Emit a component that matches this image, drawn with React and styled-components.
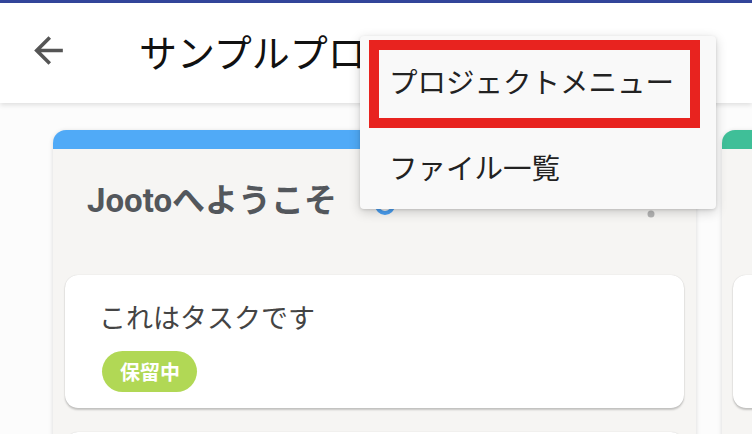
import React from 'react'
import styled, { createGlobalStyle } from 'styled-components'

const GlobalStyle = createGlobalStyle`
  html, body {
    margin: 0;
    padding: 0;
    width: 752px;
    height: 434px;
    overflow: hidden;
    background: #fcfcfc;
    font-family: Roboto, "Noto Sans CJK JP", sans-serif;
  }
`

const Page = styled.div`
  position: relative;
  width: 752px;
  height: 434px;
  overflow: hidden;
`

const TopStripe = styled.div`
  height: 3px;
  background: #34469c;
`

const AppBar = styled.header`
  position: relative;
  z-index: 2;
  height: 100px;
  box-sizing: border-box;
  display: flex;
  align-items: center;
  padding: 0 0 6px 27px;
  background: #fff;
  box-shadow: 0 2px 5px rgba(0, 0, 0, 0.12);
`

const BackIcon = styled.svg`
  width: 43px;
  height: 43px;
  fill: #555;
  flex: none;
`

const Title = styled.h1`
  margin: 0 0 0 69px;
  font-size: 38px;
  font-weight: 400;
  color: #111;
  white-space: nowrap;
  font-family: "Noto Sans CJK JP", sans-serif;
`

const Board = styled.main`
  display: flex;
  gap: 26px;
  padding: 27px 0 0 53px;
`

const Column = styled.section`
  flex: none;
  width: 643px;
  height: 340px;
  background: #f6f5f3;
  border-radius: 13px 13px 0 0;
  border-top: 19px solid ${p => p.accent};
  box-shadow: 0 1px 5px rgba(0, 0, 0, 0.14);
  overflow: hidden;
`

const ColumnHeader = styled.div`
  display: flex;
  align-items: center;
  height: 32px;
  padding: 36px 41px 0 34px;
`

const ColumnTitle = styled.h2`
  margin: 0;
  font-size: 33px;
  line-height: 32px;
  font-weight: 700;
  color: #53575c;
  white-space: nowrap;
`

const CountRing = styled.span`
  width: 12px;
  height: 12px;
  margin-left: 38px;
  border: 4px solid #4a9ef0;
  border-radius: 50%;
  transform: translateY(4px);
`

const DotsIcon = styled.svg`
  width: 8px;
  height: 26px;
  margin-left: auto;
  fill: #b3b3b3;
  transform: translateY(4px);
`

const CardList = styled.div`
  display: flex;
  flex-direction: column;
  gap: 24px;
  padding: 58px ${p => p.side}px 0;
`

const Card = styled.article`
  min-height: 133px;
  box-sizing: border-box;
  padding: 26px 37px 16px;
  background: #fff;
  border-radius: 13px;
  box-shadow: 0 2px 2px rgba(0, 0, 0, 0.2), 0 0 1px rgba(0, 0, 0, 0.2);
`

const CardText = styled.p`
  margin: 0 0 0 -3px;
  font-size: 27px;
  line-height: 32px;
  color: #444;
  font-family: "Noto Sans CJK JP", sans-serif;
`

const Tag = styled.span`
  display: inline-flex;
  align-items: center;
  height: 41px;
  margin-top: 18px;
  padding: 0 17px 0 18px;
  border-radius: 21px;
  background: ${p => p.color};
  color: #fff;
  font-size: 20px;
  font-weight: 700;
  font-family: "Noto Sans CJK JP", sans-serif;
`

const Menu = styled.ul`
  position: absolute;
  z-index: 5;
  top: 36px;
  left: 360px;
  width: 356px;
  box-sizing: border-box;
  margin: 0;
  padding: 4px 0;
  list-style: none;
  background: #f9f9f9;
  border-radius: 4px;
  box-shadow: 0 3px 12px rgba(0, 0, 0, 0.18), 0 1px 3px rgba(0, 0, 0, 0.12);
  font-family: "Noto Sans CJK JP", sans-serif;
`

const MenuItem = styled.li`
  display: flex;
  align-items: center;
  box-sizing: border-box;
  font-size: 28.5px;
  color: #222;
  white-space: nowrap;
  ${p =>
    p.highlighted
      ? `
    height: 88px;
    margin: 0 16px 0 9px;
    padding: 0 0 8px 10px;
    border: 10px solid #e8231f;
  `
      : `
    height: 77px;
    padding: 0 0 0 29px;
  `}
`

const App = () => {
  return (
    <Page>
      <GlobalStyle />
      <TopStripe />
      <AppBar>
        <BackIcon viewBox="0 0 24 24">
          <path d="M20 11H7.83l5.59-5.59L12 4l-8 8 8 8 1.41-1.41L7.83 13H20v-2z" />
        </BackIcon>
        <Title>サンプルプロジェクト</Title>
      </AppBar>
      <Board>
        <Column accent="#50aaf7">
          <ColumnHeader>
            <ColumnTitle>Jootoへようこそ</ColumnTitle>
            <CountRing />
            <DotsIcon viewBox="0 0 8 26">
              <circle cx="4" cy="4" r="3.5" />
              <circle cx="4" cy="13" r="3.5" />
              <circle cx="4" cy="22" r="3.5" />
            </DotsIcon>
          </ColumnHeader>
          <CardList side={12}>
            <Card>
              <CardText>これはタスクです</CardText>
              <Tag color="#b1d855">保留中</Tag>
            </Card>
            <Card />
          </CardList>
        </Column>
        <Column accent="#3fbf98">
          <ColumnHeader>
            <ColumnTitle>&nbsp;</ColumnTitle>
          </ColumnHeader>
          <CardList side={11}>
            <Card />
          </CardList>
        </Column>
      </Board>
      <Menu>
        <MenuItem highlighted>プロジェクトメニュー</MenuItem>
        <MenuItem>ファイル一覧</MenuItem>
      </Menu>
    </Page>
  )
}

export default App
